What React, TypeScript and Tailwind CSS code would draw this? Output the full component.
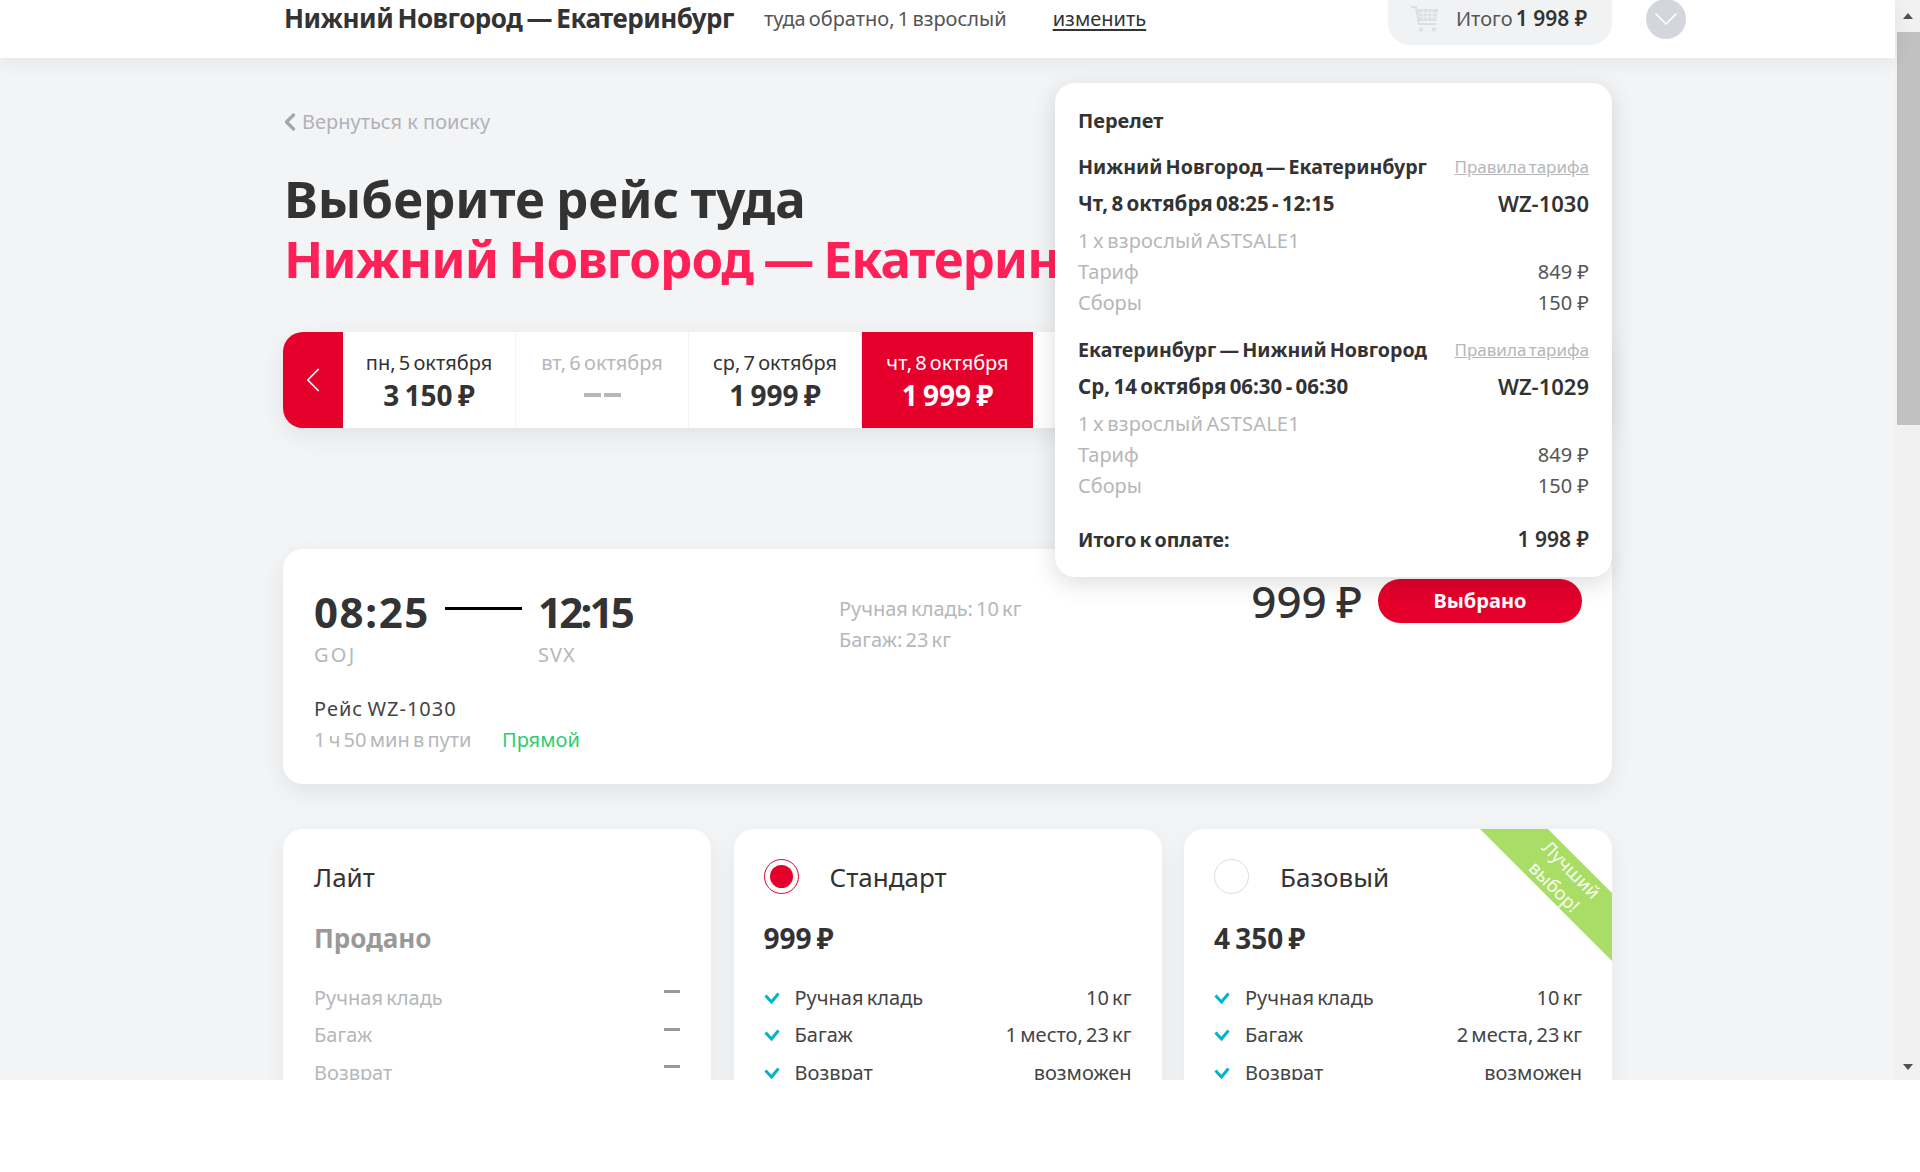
import { ChevronDown, ChevronLeft } from "lucide-react";

const dates = [
  { label: "пн, 5 октября", price: "3 150 ₽" },
  { label: "вт, 6 октября", price: "", off: true },
  { label: "ср, 7 октября", price: "1 999 ₽" },
  { label: "чт, 8 октября", price: "1 999 ₽", active: true },
];

const tariffs = [
  {
    name: "Стандарт",
    price: "999 ₽",
    selected: true,
    rows: [
      ["Ручная кладь", "10 кг"],
      ["Багаж", "1 место, 23 кг"],
      ["Возврат", "возможен"],
    ],
  },
  {
    name: "Базовый",
    price: "4 350 ₽",
    best: true,
    rows: [
      ["Ручная кладь", "10 кг"],
      ["Багаж", "2 места, 23 кг"],
      ["Возврат", "возможен"],
    ],
  },
];

function CartIcon() {
  return (
    <svg viewBox="0 0 30 30" className="h-[30px] w-[30px] text-[#dcdee1]" fill="none" stroke="currentColor">
      <path d="M1 3h5l3 17h17" strokeWidth="2" />
      <path d="M7 5h21l-2 12H9z" fill="currentColor" stroke="none" />
      <path d="M8 9h19M8.500 13h18M13 6v10M17.500 6v10M22 6v10" stroke="#f1f2f4" strokeWidth="1" />
      <circle cx="11" cy="25.500" r="2.200" fill="currentColor" stroke="none" />
      <circle cx="24" cy="25.500" r="2.200" fill="currentColor" stroke="none" />
    </svg>
  );
}

function CheckMark() {
  return (
    <svg viewBox="0 0 16 12" className="mr-[15px] h-[12px] w-[16px] text-[#00b5c9]" fill="none" stroke="currentColor" strokeWidth="3">
      <path d="M1.500 3.500 7.500 10 14.500 1.500" />
    </svg>
  );
}

function Segment({ route, when, flight }: { route: string; when: string; flight: string }) {
  return (
    <div>
      <div className="flex h-[37px] items-center justify-between">
        <span className="text-[19.6px] font-bold text-[#333]">{route}</span>
        <span className="text-[17px] text-[#b5b7ba] underline">Правила тарифа</span>
      </div>
      <div className="flex h-[37px] items-center justify-between text-[20.5px] font-bold text-[#333]">
        <span>{when}</span>
        <span className="text-[22px] font-semibold">{flight}</span>
      </div>
      <div className="mt-[3px] flex h-[31px] items-center text-[20px] tracking-[0.2px] text-[#b5b7ba]">1 x взрослый ASTSALE1</div>
      <div className="flex h-[31px] items-center justify-between text-[20px] text-[#b5b7ba]">
        <span>Тариф</span>
        <span className="text-[#555] [word-spacing:0]">849 ₽</span>
      </div>
      <div className="flex h-[31px] items-center justify-between text-[20px] text-[#b5b7ba]">
        <span>Сборы</span>
        <span className="text-[#555] [word-spacing:0]">150 ₽</span>
      </div>
    </div>
  );
}

function TariffCard({ t }: { t: (typeof tariffs)[number] }) {
  return (
    <div className="relative h-[300px] overflow-hidden rounded-[20px] bg-white px-[30px] pt-[30px] shadow-[0_8px_24px_rgba(0,0,0,0.06)]">
      {t.best && (
        <div className="absolute right-[-61px] top-[25px] flex h-[48px] w-[220px] rotate-45 items-center justify-center bg-[#aadd66] text-center text-[18.5px] leading-[24px] text-white/90">
          Лучший
          <br />
          выбор!
        </div>
      )}
      <div className="flex h-[35px] items-center gap-[31px]">
        <div
          className={
            t.selected
              ? "flex h-[35px] w-[35px] items-center justify-center rounded-full border border-[#e4002b]"
              : "h-[35px] w-[35px] rounded-full border border-[#ddd]"
          }
        >
          {t.selected && <div className="h-[23px] w-[23px] rounded-full bg-[#e4002b]" />}
        </div>
        <span className="pt-[2px] text-[26px] text-[#333]">{t.name}</span>
      </div>
      <div className="mt-[25px] text-[28px] font-bold leading-[38px] text-[#333]">{t.price}</div>
      <div className="mt-[22px]">
        {t.rows.map(([k, v]) => (
          <div key={k} className="flex h-[37.5px] items-center text-[20px] text-[#444]">
            <CheckMark />
            <span>{k}</span>
            <span className="ml-auto">{v}</span>
          </div>
        ))}
      </div>
    </div>
  );
}

export default function App() {
  return (
    <div className="h-[1172px] w-full overflow-hidden bg-white font-['Noto_Sans',sans-serif] [word-spacing:-2px]">
      <div className="flex h-[1080px] overflow-hidden bg-[#f3f4f6]">
        <div className="relative min-w-0 flex-1">
          {/* Header */}
          <header className="flex h-[58px] items-start bg-white pl-[284px] shadow-[0_4px_20px_rgba(0,0,0,0.07)]">
            <div className="flex h-[37px] items-center">
              <h1 className="text-[26px] font-bold tracking-[-0.5px] text-[#333]">Нижний Новгород — Екатеринбург</h1>
              <span className="ml-[30px] text-[20px] text-[#555]">туда обратно, 1 взрослый</span>
              <a className="ml-[46px] text-[20px] text-[#333] underline underline-offset-[3px]">изменить</a>
            </div>
            <div className="ml-auto mr-[209px] flex items-start">
              <div className="flex h-[45px] w-[224px] items-center rounded-b-[22px] bg-[#f1f2f4] pb-[7px] pl-[22px]">
                <CartIcon />
                <span className="ml-[16px] text-[20px] text-[#555]">
                  Итого <b className="text-[21px] font-semibold text-[#333] [word-spacing:0]">1 998 ₽</b>
                </span>
              </div>
              <div className="ml-[34px] flex h-[40px] w-[40px] -translate-y-px items-center justify-center rounded-full bg-[#d3d7dd]">
                <ChevronDown className="h-[40px] w-[40px] text-white" strokeWidth={1} />
              </div>
            </div>
          </header>

          <main className="ml-[283px] w-[1329px]">
            <a className="mt-[50px] flex h-[28px] items-center text-[20px] text-[#b0b2b5] [word-spacing:0]">
              <ChevronLeft className="-ml-[7px] -mr-[2px] h-[28px] w-[28px] text-[#a5a7aa]" strokeWidth={3} />
              <span>Вернуться к поиску</span>
            </a>

            <h2 className="mt-[32px] whitespace-nowrap pl-px text-[51px] font-bold leading-[60px] text-[#333]">
              Выберите рейс туда
              <br />
              <span className="tracking-[-1px] text-[#ff2058]">Нижний Новгород — Екатеринбург</span>
            </h2>

            {/* Date strip */}
            <div className="mt-[44px] flex h-[96px] overflow-hidden rounded-[20px] bg-white shadow-[0_8px_24px_rgba(0,0,0,0.07)]">
              <div className="flex w-[60px] items-center justify-center bg-[#e4002b]">
                <ChevronLeft className="h-[42px] w-[42px] text-white" strokeWidth={1} />
              </div>
              {dates.map((d) => (
                <div
                  key={d.label}
                  className={
                    d.active
                      ? "flex w-[171px] flex-col items-center bg-[#e4002b] pt-[16px] text-white"
                      : "flex w-[173px] flex-col items-center border-r border-[#f3f4f6] pt-[16px] text-[#333]"
                  }
                >
                  <span className={d.off ? "text-[20px] leading-[30px] text-[#b5b7ba]" : "text-[20px] leading-[30px]"}>{d.label}</span>
                  {d.off ? (
                    <span className="mt-[15px] flex gap-[3px]">
                      <span className="h-[4px] w-[17px] bg-[#b5b7ba]" />
                      <span className="h-[4px] w-[17px] bg-[#b5b7ba]" />
                    </span>
                  ) : (
                    <span className="text-[28px] font-bold leading-[34px]">{d.price}</span>
                  )}
                </div>
              ))}
              <div className="ml-auto w-[60px] bg-[#e4002b]" />
            </div>

            {/* Selected flight */}
            <section className="relative mt-[121px] h-[235px] rounded-[20px] bg-white pl-[31px] shadow-[0_8px_24px_rgba(0,0,0,0.07)]">
              <div className="absolute right-[30px] top-[24px] flex items-center">
                <span className="text-[44px] font-medium leading-[56px] text-[#333]">999 ₽</span>
                <button className="ml-[16px] h-[44px] w-[204px] rounded-full bg-[#e4002b] text-[20px] font-bold text-white">Выбрано</button>
              </div>
              <div className="flex pt-[34px]">
                <div className="w-[224px]">
                  <div className="flex items-center text-[42px] font-bold leading-[58px] tracking-[1.6px] text-[#333]">
                    08:25
                    <span className="mb-[8px] ml-[15px] h-[3px] w-[77px] bg-black" />
                  </div>
                  <div className="text-[20px] leading-[28px] tracking-[2.3px] text-[#b5b7ba]">GOJ</div>
                </div>
                <div>
                  <div className="text-[42px] font-bold leading-[58px] tracking-[-2.8px] text-[#333]">12:15</div>
                  <div className="text-[20px] leading-[28px] tracking-[1px] text-[#b5b7ba]">SVX</div>
                </div>
                <div className="ml-[207px] text-[20px] leading-[31px] text-[#b5b7ba]">
                  <div className="mt-[10px]">Ручная кладь: 10 кг</div>
                  <div>Багаж: 23 кг</div>
                </div>
              </div>
              <div className="mt-[23.5px] text-[20px] leading-[31px] tracking-[1px] text-[#444]">Рейс WZ-1030</div>
              <div className="flex text-[20px] leading-[32px] text-[#b5b7ba]">
                <span className="w-[188px]">1 ч 50 мин в пути</span>
                <span className="text-[#2ecc71]">Прямой</span>
              </div>
            </section>

            {/* Tariffs */}
            <div className="mt-[45px] grid grid-cols-[428px_428px_428px] gap-[22.5px]">
              <div className="h-[300px] rounded-[20px] bg-white px-[31px] pt-[30px] shadow-[0_8px_24px_rgba(0,0,0,0.06)]">
                <div className="flex h-[35px] items-center pt-[2px] text-[26px] text-[#333]">Лайт</div>
                <div className="mt-[25px] text-[26px] font-bold leading-[38px] text-[#999]">Продано</div>
                <div className="mt-[22px]">
                  {["Ручная кладь", "Багаж", "Возврат"].map((k) => (
                    <div key={k} className="flex h-[37.5px] items-center justify-between text-[20px] text-[#b5b7ba]">
                      <span>{k}</span>
                      <span className="mb-[12px] h-[3px] w-[16px] bg-[#999]" />
                    </div>
                  ))}
                </div>
              </div>
              {tariffs.map((t) => (
                <TariffCard key={t.name} t={t} />
              ))}
            </div>
          </main>

          {/* Fare summary dropdown */}
          <div className="absolute left-[1055px] top-[83px] h-[494px] w-[557px] rounded-[20px] bg-white px-[23px] pt-[21px] shadow-[0_6px_24px_rgba(0,0,0,0.14)]">
            <div className="flex h-[34px] items-center text-[20px] font-bold text-[#333]">Перелет</div>
            <div className="mt-[10px]">
              <Segment route="Нижний Новгород — Екатеринбург" when="Чт, 8 октября 08:25 - 12:15" flight="WZ-1030" />
            </div>
            <div className="mt-[13px]">
              <Segment route="Екатеринбург — Нижний Новгород" when="Ср, 14 октября 06:30 - 06:30" flight="WZ-1029" />
            </div>
            <div className="mt-[20px] flex h-[37px] items-center justify-between text-[19.5px] font-bold text-[#333]">
              <span>Итого к оплате:</span>
              <span className="text-[21px] font-semibold [word-spacing:0]">1 998 ₽</span>
            </div>
          </div>
        </div>

        {/* Scrollbar */}
        <div className="flex w-[25px] flex-col items-center bg-[#f1f1f1]">
          <div className="flex h-[32px] w-full items-center justify-center">
            <div className="h-0 w-0 border-x-[5px] border-b-[6px] border-x-transparent border-b-[#505050]" />
          </div>
          <div className="ml-[2px] h-[393px] w-[23px] bg-[#c1c1c1]" />
          <div className="mt-auto flex h-[26px] w-full items-center justify-center">
            <div className="h-0 w-0 border-x-[5px] border-t-[6px] border-x-transparent border-t-[#505050]" />
          </div>
        </div>
      </div>
    </div>
  );
}
